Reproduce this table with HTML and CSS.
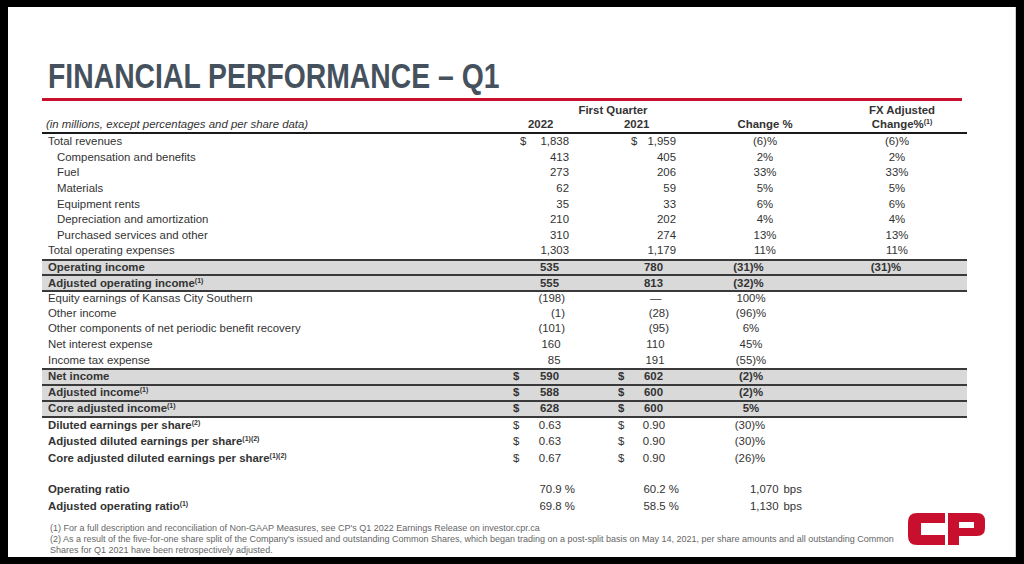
FILE: index.html
```html
<!DOCTYPE html>
<html>
<head>
<meta charset="utf-8">
<title>Financial Performance – Q1</title>
<link rel="stylesheet" href="styles.css">
</head>
<body>
<div class="slide">
  <div class="content">
    <h1 class="title">FINANCIAL PERFORMANCE – Q1</h1>
    <div class="redline"></div>

    <div class="thead">
      <div class="hrow hrow-a">
        <div class="lbl"></div>
        <div class="fq">First Quarter</div>
        <div class="chg"></div>
        <div class="fx">FX Adjusted</div>
      </div>
      <div class="hrow hrow-b">
        <div class="lbl note">(in millions, except percentages and per share data)</div>
        <div class="c22">2022</div>
        <div class="c21">2021</div>
        <div class="chg">Change %</div>
        <div class="fx">Change%<sup>(1)</sup></div>
      </div>
    </div>

    <div class="tbody">
      <div class="row ra">
        <div class="lbl">Total revenues</div>
        <div class="c22"><span class="d">$</span><span class="n">1,838</span></div>
        <div class="c21"><span class="d">$</span><span class="n">1,959</span></div>
        <div class="chg">(6)%</div>
        <div class="fx">(6)%</div>
      </div>
      <div class="row ra">
        <div class="lbl ind">Compensation and benefits</div>
        <div class="c22"><span class="n">413</span></div>
        <div class="c21"><span class="n">405</span></div>
        <div class="chg">2%</div>
        <div class="fx">2%</div>
      </div>
      <div class="row ra">
        <div class="lbl ind">Fuel</div>
        <div class="c22"><span class="n">273</span></div>
        <div class="c21"><span class="n">206</span></div>
        <div class="chg">33%</div>
        <div class="fx">33%</div>
      </div>
      <div class="row ra">
        <div class="lbl ind">Materials</div>
        <div class="c22"><span class="n">62</span></div>
        <div class="c21"><span class="n">59</span></div>
        <div class="chg">5%</div>
        <div class="fx">5%</div>
      </div>
      <div class="row ra">
        <div class="lbl ind">Equipment rents</div>
        <div class="c22"><span class="n">35</span></div>
        <div class="c21"><span class="n">33</span></div>
        <div class="chg">6%</div>
        <div class="fx">6%</div>
      </div>
      <div class="row ra">
        <div class="lbl ind">Depreciation and amortization</div>
        <div class="c22"><span class="n">210</span></div>
        <div class="c21"><span class="n">202</span></div>
        <div class="chg">4%</div>
        <div class="fx">4%</div>
      </div>
      <div class="row ra">
        <div class="lbl ind">Purchased services and other</div>
        <div class="c22"><span class="n">310</span></div>
        <div class="c21"><span class="n">274</span></div>
        <div class="chg">13%</div>
        <div class="fx">13%</div>
      </div>
      <div class="row ra">
        <div class="lbl">Total operating expenses</div>
        <div class="c22"><span class="n">1,303</span></div>
        <div class="c21"><span class="n">1,179</span></div>
        <div class="chg">11%</div>
        <div class="fx">11%</div>
      </div>

      <div class="row rb b shade rule">
        <div class="lbl">Operating income</div>
        <div class="c22"><span class="n">535</span></div>
        <div class="c21"><span class="n">780</span></div>
        <div class="chg">(31)%</div>
        <div class="fx">(31)%</div>
      </div>
      <div class="row rb b shade rule">
        <div class="lbl">Adjusted operating income<sup>(1)</sup></div>
        <div class="c22"><span class="n">555</span></div>
        <div class="c21"><span class="n">813</span></div>
        <div class="chg">(32)%</div>
        <div class="fx"></div>
      </div>

      <div class="row rc rule">
        <div class="lbl">Equity earnings of Kansas City Southern</div>
        <div class="c22"><span class="n">(198)</span></div>
        <div class="c21"><span class="n dash">—</span></div>
        <div class="chg">100%</div>
        <div class="fx"></div>
      </div>
      <div class="row rc">
        <div class="lbl">Other income</div>
        <div class="c22"><span class="n">(1)</span></div>
        <div class="c21"><span class="n">(28)</span></div>
        <div class="chg">(96)%</div>
        <div class="fx"></div>
      </div>
      <div class="row rc">
        <div class="lbl">Other components of net periodic benefit recovery</div>
        <div class="c22"><span class="n">(101)</span></div>
        <div class="c21"><span class="n">(95)</span></div>
        <div class="chg">6%</div>
        <div class="fx"></div>
      </div>
      <div class="row rc">
        <div class="lbl">Net interest expense</div>
        <div class="c22"><span class="n p">160</span></div>
        <div class="c21"><span class="n p">110</span></div>
        <div class="chg">45%</div>
        <div class="fx"></div>
      </div>
      <div class="row rc">
        <div class="lbl">Income tax expense</div>
        <div class="c22"><span class="n p">85</span></div>
        <div class="c21"><span class="n p">191</span></div>
        <div class="chg">(55)%</div>
        <div class="fx"></div>
      </div>

      <div class="row rd b shade rule">
        <div class="lbl">Net income</div>
        <div class="c22"><span class="d">$</span><span class="n">590</span></div>
        <div class="c21"><span class="d">$</span><span class="n">602</span></div>
        <div class="chg">(2)%</div>
        <div class="fx"></div>
      </div>
      <div class="row rd b shade rule">
        <div class="lbl">Adjusted income<sup>(1)</sup></div>
        <div class="c22"><span class="d">$</span><span class="n">588</span></div>
        <div class="c21"><span class="d">$</span><span class="n">600</span></div>
        <div class="chg">(2)%</div>
        <div class="fx"></div>
      </div>
      <div class="row rd b shade rule">
        <div class="lbl">Core adjusted income<sup>(1)</sup></div>
        <div class="c22"><span class="d">$</span><span class="n">628</span></div>
        <div class="c21"><span class="d">$</span><span class="n">600</span></div>
        <div class="chg">5%</div>
        <div class="fx"></div>
      </div>

      <div class="row re rule">
        <div class="lbl b">Diluted earnings per share<sup>(2)</sup></div>
        <div class="c22"><span class="d">$</span><span class="n">0.63</span></div>
        <div class="c21"><span class="d">$</span><span class="n">0.90</span></div>
        <div class="chg">(30)%</div>
        <div class="fx"></div>
      </div>
      <div class="row re">
        <div class="lbl b">Adjusted diluted earnings per share<sup>(1)(2)</sup></div>
        <div class="c22"><span class="d">$</span><span class="n">0.63</span></div>
        <div class="c21"><span class="d">$</span><span class="n">0.90</span></div>
        <div class="chg">(30)%</div>
        <div class="fx"></div>
      </div>
      <div class="row re">
        <div class="lbl b">Core adjusted diluted earnings per share<sup>(1)(2)</sup></div>
        <div class="c22"><span class="d">$</span><span class="n">0.67</span></div>
        <div class="c21"><span class="d">$</span><span class="n">0.90</span></div>
        <div class="chg">(26)%</div>
        <div class="fx"></div>
      </div>

      <div class="spacer"></div>

      <div class="row rf">
        <div class="lbl b">Operating ratio</div>
        <div class="c22"><span class="n">70.9 %</span></div>
        <div class="c21"><span class="n">60.2 %</span></div>
        <div class="chg"><span>1,070</span><span class="bps">bps</span></div>
        <div class="fx"></div>
      </div>
      <div class="row rf">
        <div class="lbl b">Adjusted operating ratio<sup>(1)</sup></div>
        <div class="c22"><span class="n">69.8 %</span></div>
        <div class="c21"><span class="n">58.5 %</span></div>
        <div class="chg"><span>1,130</span><span class="bps">bps</span></div>
        <div class="fx"></div>
      </div>
    </div>

    <div class="notes">
      <p>(1) For a full description and reconciliation of Non-GAAP Measures, see CP's Q1 2022 Earnings Release on investor.cpr.ca</p>
      <p>(2) As a result of the five-for-one share split of the Company's issued and outstanding Common Shares, which began trading on a post-split basis on May 14, 2021, per share amounts and all outstanding Common<br>Shares for Q1 2021 have been retrospectively adjusted.</p>
    </div>
  </div>

  <svg class="logo" viewBox="0 0 77 32" width="77" height="32" aria-label="CP logo">
    <path d="M37 0 H9 Q0 0 0 9 V23 Q0 32 9 32 H37 V22 H13 V10 H37 Z" fill="#c8102e"/>
    <path fill-rule="evenodd" d="M40 0 H69 Q77 0 77 8 V15 Q77 23 69 23 H51 V32 H40 Z M51 9 H66 V15 H51 Z" fill="#c8102e"/>
  </svg>
</div>
</body>
</html>
```

FILE: styles.css
```css
* {
  box-sizing: border-box;
  margin: 0;
  padding: 0;
}

html, body {
  width: 1024px;
  height: 564px;
  overflow: hidden;
}

body {
  background: #000;
  font-family: "Liberation Sans", Arial, sans-serif;
  color: #333;
}

.slide {
  position: relative;
  width: 1008px;
  height: 550px;
  margin: 7px 0 0 8px;
  background: #fff;
  border-right: 1px solid #cfcfcf;
  padding: 51.4px 0 0 34px;
}

.content {
  width: 925px;
}

.title {
  font-size: 35px;
  line-height: 35px;
  font-weight: 700;
  color: #45525e;
  margin-left: 6px;
  white-space: nowrap;
  transform: scaleX(0.81);
  transform-origin: 0 0;
}

.redline {
  width: 920px;
  height: 3px;
  background: #c8102e;
  margin-top: 4.6px;
}

.hrow,
.row {
  display: grid;
  grid-template-columns: 468px 70px 110px 150px 127px;
  align-items: center;
  font-size: 11.4px;
  line-height: 13px;
  white-space: nowrap;
}

.hrow {
  height: 15.5px;
  font-weight: 700;
}

.hrow-a {
  padding-top: 3px;
}

.hrow-b {
  height: 17.5px;
  border-bottom: 2px solid #1a1a1a;
}

.hrow .fq {
  grid-column: 2 / 4;
  text-align: center;
  padding-left: 26px;
}

.hrow .c22 {
  text-align: center;
  padding-left: 18px;
}

.hrow .c21 {
  text-align: center;
  padding-left: 44px;
}

.hrow .chg {
  text-align: center;
}

.hrow .fx {
  text-align: center;
  padding-right: 3px;
}

.note {
  font-style: italic;
  font-weight: 400;
}

.hrow .note {
  padding-left: 4px;
}

sup {
  font-size: 7px;
  line-height: 0;
  vertical-align: 4px;
}

.row {
  height: 15.6px;
}

.row.rule {
  border-top: 2px solid #3a3a3a;
}

.row.shade {
  background: #d9d9d9;
}

.b {
  font-weight: 700;
}

.lbl {
  padding-left: 6px;
}

.lbl.ind {
  padding-left: 15px;
}

.c22,
.c21 {
  display: flex;
}

.d {
  margin-right: auto;
}

.n {
  margin-left: auto;
}

.chg,
.fx {
  text-align: center;
}

/* section A: revenues & expenses */
.ra .c22 { padding: 0 11px 0 10px; }
.ra .c21 { padding: 0 14px 0 51px; }
.ra .fx { padding-right: 13px; }

/* section B: operating income (shaded) */
.rb .c22 { padding-right: 21px; }
.rb .c21 { padding-right: 27px; }
.rb .chg { padding-right: 33px; }
.rb .fx { padding-right: 35px; }

/* section C: other items */
.rc .c22 { padding-right: 15px; }
.rc .c21 { padding-right: 21px; }
.rc .chg { padding-right: 28px; }
.p { padding-right: 4.5px; }
.dash { padding-right: 7.5px; }

/* section D: income (shaded) */
.rd { height: 15.9px; }
.rd .c22 { padding: 0 21px 0 3px; }
.rd .c21 { padding: 0 27px 0 38px; }
.rd .chg { padding-right: 28px; }

/* section E: per share */
.re { height: 17px; }
.re .c22 { padding: 0 19px 0 3px; }
.re .c21 { padding: 0 25px 0 38px; }
.re .chg { padding-right: 30px; }

.spacer {
  height: 14.1px;
}

/* section F: ratios */
.rf { height: 17px; }
.rf .c22 { padding-right: 5px; }
.rf .c21 { padding-right: 11px; }
.rf .chg {
  text-align: left;
  padding-left: 60px;
}

.bps {
  margin-left: 5px;
}

.notes {
  margin-top: 8.2px;
  margin-left: 8px;
  font-size: 9px;
  line-height: 11px;
  color: #666;
  white-space: nowrap;
}

.logo {
  position: absolute;
  left: 900px;
  top: 506px;
  display: block;
}
```
